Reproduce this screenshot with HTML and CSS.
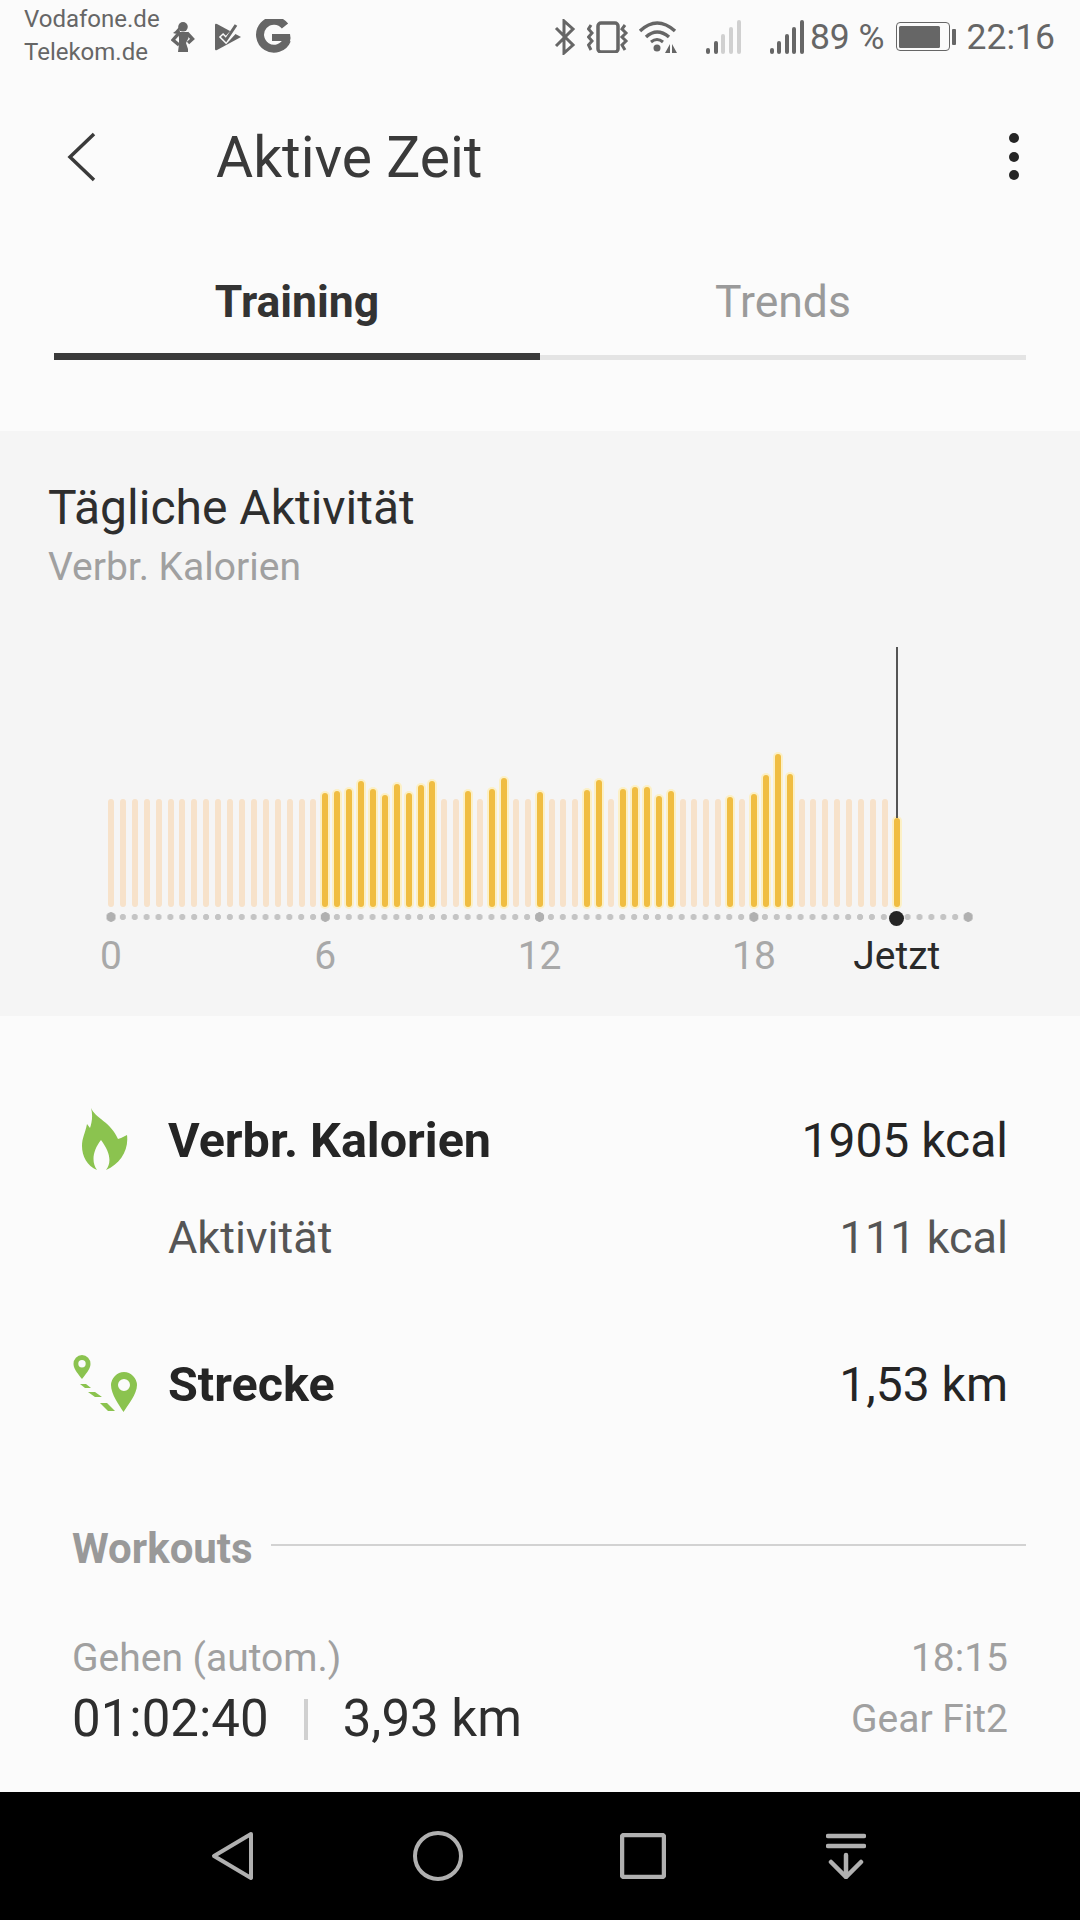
FILE: index.html
```html
<!DOCTYPE html>
<html lang="de">
<head>
    <meta charset="UTF-8">
    <meta name="viewport" content="width=device-width, initial-scale=1.0">
    <title>Aktive Zeit</title>
    <link rel="stylesheet" href="styles.css">
</head>
<body>
    <div class="status-bar">
        <div class="carrier">Vodafone.de<br>Telekom.de</div>
        <svg class="ic-person" width="24" height="30" viewBox="0 0 24 30"><circle cx="12" cy="4.800" r="4.800"/><path d="M8 5 Q5 9 2 11 Q6 13 9 10 Z"/><path d="M7 10 L17 10 L17.500 16 L15 21 L17 27 L17 30 L7 30 L8 22 L8 16 Z"/><path class="line" d="M8 11 L2 18 L8 23 M16 11 L21.500 17 L17 21" fill="none" stroke-width="3.400"/></svg>
        <svg class="ic-flag" width="26" height="28" viewBox="0 0 26 28"><path d="M0 2 Q0 0 2 1 L26 14 L2 27 Q0 28 0 26 Z"/><path class="cut" d="M6 12 L11 17 L22 5" fill="none" stroke-width="6"/><path class="line" d="M7 13 L11 17 L21 2" fill="none" stroke-width="3"/></svg>
        <svg class="ic-g" width="36" height="36" viewBox="0 0 36 36"><path d="M30 7 A14 14 0 1 0 32 21" fill="none" stroke-width="8"/><path d="M17 15 L35 15 Q36 19 35 22 L17 22 Z" class="fill"/></svg>
        <div class="status-right">
            <svg class="ic-stroke" width="22" height="36" viewBox="0 0 22 36"><path d="M2 9 L19 26 L10 34 L10 2 L19 10 L2 27" fill="none" stroke-width="3"/></svg>
            <svg class="ic-stroke ic-vibrate" width="42" height="32" viewBox="0 0 42 32"><rect x="11" y="2" width="20" height="29" rx="3" fill="none" stroke-width="3.500"/><path d="M4 4 L1.500 8 L5 12 L1.500 16 L5 20 L1.500 24 L4 29" fill="none" stroke-width="3"/><path d="M38 4 L35 8 L39 12 L35 16 L39 20 L35 24 L38 29" fill="none" stroke-width="3"/></svg>
            <svg class="ic-stroke ic-wifi" width="40" height="34" viewBox="0 0 40 34"><path d="M2 11 Q19 -5 37 11" fill="none" stroke-width="3.500"/><path d="M8 17 Q19 7 31 17" fill="none" stroke-width="3.500"/><path d="M13 22 Q19 17 25 22" fill="none" stroke-width="3"/><circle class="fill" cx="19" cy="28" r="3.500"/><path class="fill" d="M32 24 L32 33 L27 33 Z M34 24 L39 33 L34 33 Z"/></svg>
            <div class="signal faded"><i class="s1"></i><i class="s2"></i><i class="s3"></i><i class="s4"></i><i class="s5"></i></div>
            <div class="signal"><i class="s1"></i><i class="s2"></i><i class="s3"></i><i class="s4"></i><i class="s5"></i></div>
            <span class="battery-text">89 %</span>
            <div class="battery"><div class="battery-body"><div class="battery-fill"></div></div><div class="battery-nub"></div></div>
            <span class="clock">22:16</span>
        </div>
    </div>

    <div class="toolbar">
        <svg class="back" width="30" height="50" viewBox="0 0 30 50"><path d="M27 2 L3 25 L27 48" fill="none" stroke="#3a3a3a" stroke-width="3.500"/></svg>
        <h1>Aktive Zeit</h1>
        <div class="kebab"><i></i><i></i><i></i></div>
    </div>

    <div class="tabs">
        <div class="tab active">Training</div>
        <div class="tab">Trends</div>
    </div>

    <div class="chart-card">
        <h2>Tägliche Aktivität</h2>
        <div class="chart-sub">Verbr. Kalorien</div>
        <div class="bars">
            <i></i><i></i><i></i><i></i><i></i><i></i><i></i><i></i><i></i><i></i><i></i><i></i><i></i><i></i><i></i><i></i><i></i><i></i>
            <i class="on" style="height:114px"></i><i class="on" style="height:116px"></i><i class="on" style="height:118px"></i><i class="on" style="height:126px"></i><i class="on" style="height:118px"></i><i class="on" style="height:112px"></i><i class="on" style="height:123px"></i><i class="on" style="height:114px"></i><i class="on" style="height:122px"></i><i class="on" style="height:126px"></i>
            <i></i><i></i>
            <i class="on" style="height:116px"></i>
            <i></i>
            <i class="on" style="height:118px"></i><i class="on" style="height:129px"></i>
            <i></i><i></i>
            <i class="on" style="height:115px"></i>
            <i></i><i></i><i></i>
            <i class="on" style="height:117px"></i><i class="on" style="height:127px"></i>
            <i></i>
            <i class="on" style="height:118px"></i><i class="on" style="height:120px"></i><i class="on" style="height:120px"></i><i class="on" style="height:111px"></i><i class="on" style="height:116px"></i>
            <i></i><i></i><i></i><i></i>
            <i class="on" style="height:110px"></i>
            <i></i>
            <i class="on" style="height:113px"></i><i class="on" style="height:132px"></i><i class="on" style="height:153px"></i><i class="on" style="height:133px"></i>
            <i></i><i></i><i></i><i></i><i></i><i></i><i></i><i></i>
            <i class="on now" style="height:89px"></i>
        </div>
        <div class="ticks"></div>
        <div class="axis">
            <span>0</span><span>6</span><span>12</span><span>18</span><span class="axis-now">Jetzt</span>
        </div>
    </div>

    <div class="stat-row first">
        <div class="stat-icon">
            <svg class="flame" width="46" height="63" viewBox="0 0 46 63"><path d="M9 0 C13 10 29 14 36 31 L39 30 L45 27 C47 42 38 56 24 62 C30 54 28 44 19 32 C11 42 9 54 15 62 C5 58 0 48 0 38 C0 30 3 26 5 16 L8 20 C10 14 11 7 9 0 Z" fill="#8bc34f"/></svg>
        </div>
        <span class="stat-label">Verbr. Kalorien</span>
        <span class="stat-value">1905 kcal</span>
    </div>
    <div class="stat-row sub">
        <div class="stat-icon"></div>
        <span class="stat-label">Aktivität</span>
        <span class="stat-value">111 kcal</span>
    </div>
    <div class="stat-row third">
        <div class="stat-icon">
            <svg class="pins" width="65" height="58" viewBox="0 0 65 58"><path fill-rule="evenodd" fill="#8bc34f" d="M9 0 A8.700 8.700 0 0 1 17.500 9 C17.500 14 12 20 9 24 C6 20 0.500 14 0.500 9 A8.700 8.700 0 0 1 9 0 Z M9 5 A3.700 3.700 0 1 0 9 12.400 A3.700 3.700 0 1 0 9 5 Z"/><path fill-rule="evenodd" fill="#8bc34f" d="M51 17 A13.500 13.500 0 0 1 64 30 C64 39 55 50 50.500 57 C46 50 38 39 38 30 A13.500 13.500 0 0 1 51 17 Z M51 24 A6 6 0 1 0 51 36 A6 6 0 1 0 51 24 Z"/><path fill="#8bc34f" d="M7 29 L13 29 L18 33 L12 33 Z M15 37 L22 37 L29 42 L22 42 Z M27 48 L34 48 L42 56 L35 56 Z"/></svg>
        </div>
        <span class="stat-label">Strecke</span>
        <span class="stat-value">1,53 km</span>
    </div>

    <div class="section-head">
        <span>Workouts</span>
        <div class="rule"></div>
    </div>

    <div class="workout">
        <div class="workout-row top">
            <span>Gehen (autom.)</span>
            <span>18:15</span>
        </div>
        <div class="workout-row main">
            <div class="workout-figures">
                <span>01:02:40</span>
                <i class="sep"></i>
                <span>3,93 km</span>
            </div>
            <span class="device">Gear Fit2</span>
        </div>
    </div>

    <div class="nav-bar">
        <svg class="nav-back" width="44" height="50" viewBox="0 0 44 50"><path d="M40 3 L3 25 L40 47 Z" fill="none" stroke="#b0b0b0" stroke-width="4" stroke-linejoin="round"/></svg>
        <svg width="50" height="50" viewBox="0 0 50 50"><circle cx="25" cy="25" r="23" fill="none" stroke="#b0b0b0" stroke-width="4"/></svg>
        <svg width="46" height="46" viewBox="0 0 46 46"><rect x="2" y="2" width="42" height="42" rx="2" fill="none" stroke="#b0b0b0" stroke-width="4.500"/></svg>
        <svg class="nav-drop" width="40" height="46" viewBox="0 0 40 46"><path d="M2 3 L38 3 M2 13 L38 13 M20 22 L20 44 M5 29 L20 44 L35 29" fill="none" stroke="#b0b0b0" stroke-width="4.500" stroke-linecap="round"/></svg>
    </div>
</body>
</html>
```

FILE: styles.css
```css
* {
    box-sizing: border-box;
}
body {
    font-family: Roboto, "Liberation Sans", sans-serif;
    margin: 0;
    padding: 0;
    width: 1080px;
    height: 1920px;
    overflow: hidden;
    background: #fbfbfb;
    display: flex;
    flex-direction: column;
}
.status-bar {
    display: flex;
    align-items: center;
    height: 70px;
    padding: 3px 25px 0 24px;
    color: #666;
    flex-shrink: 0;
}
.status-bar svg {
    fill: #666;
    stroke: none;
    flex-shrink: 0;
}
.status-bar .ic-stroke {
    fill: none;
    stroke: #666;
}
.status-bar .ic-stroke .fill {
    fill: #666;
    stroke: none;
}
.carrier {
    font-size: 24px;
    line-height: 33px;
    width: 147px;
    margin-top: -1px;
}
.ic-person .line {
    stroke: #666;
}
.ic-flag {
    margin-left: 20px;
}
.ic-flag .cut {
    stroke: #fbfbfb;
}
.ic-flag .line {
    stroke: #666;
}
.ic-g {
    margin-left: 14px;
}
.ic-g path {
    stroke: #666;
}
.ic-g .fill {
    stroke: none;
}
.status-right {
    margin-left: auto;
    display: flex;
    align-items: center;
}
.ic-vibrate {
    margin-left: 11px;
}
.ic-wifi {
    margin-left: 9px;
}
.signal {
    display: flex;
    align-items: flex-end;
    gap: 3.600px;
    height: 34px;
    margin-left: 28px;
}
.signal i {
    width: 4px;
    background: #666;
    border-radius: 2px;
}
.signal + .signal {
    margin-left: 29px;
}
.signal.faded i {
    background: #d0d0d0;
}
.signal.faded .s1,
.signal.faded .s2 {
    background: #666;
}
.s1 { height: 6px; }
.s2 { height: 13px; }
.s3 { height: 20px; }
.s4 { height: 27px; }
.s5 { height: 34px; }
.battery-text {
    font-size: 35.500px;
    margin-left: 6px;
}
.clock {
    font-size: 35.500px;
    margin-left: 11px;
}
.battery {
    display: flex;
    align-items: center;
    gap: 2px;
    margin-left: 11px;
}
.battery-body {
    width: 54px;
    height: 29px;
    border: 1.500px solid #666;
    border-radius: 4px;
    padding: 2.500px;
}
.battery-fill {
    width: 41px;
    height: 100%;
    background: #666;
    border-radius: 1.500px;
}
.battery-nub {
    width: 4px;
    height: 16px;
    background: #666;
    border-radius: 1px;
}
.toolbar {
    display: flex;
    align-items: center;
    height: 174px;
    padding: 1px 0 0 67px;
    flex-shrink: 0;
}
.back {
    margin-top: -2px;
}
h1 {
    margin: 0 0 0 119px;
    font-size: 57px;
    font-weight: 400;
    color: #3a3a3a;
}
.kebab {
    margin-left: auto;
    margin-right: 61px;
    margin-top: -2px;
    display: flex;
    flex-direction: column;
    gap: 8.500px;
}
.kebab i {
    display: block;
    width: 10px;
    height: 10px;
    border-radius: 50%;
    background: #252525;
}
.tabs {
    display: flex;
    margin: 0 54px;
    height: 116px;
    flex-shrink: 0;
}
.tab {
    flex: 1;
    text-align: center;
    font-size: 44.500px;
    line-height: 116px;
    color: #9a9a9a;
    border-bottom: 5px solid #e4e4e4;
}
.tab.active {
    font-weight: 700;
    color: #333;
    border-bottom: 7px solid #3a3a3a;
}
.chart-card {
    margin-top: 71px;
    height: 585px;
    padding-top: 51px;
    background: #f5f5f5;
    flex-shrink: 0;
}
h2 {
    margin: 0 0 0 48px;
    font-size: 48px;
    line-height: 52px;
    font-weight: 400;
    color: #2e2e2e;
}
.chart-sub {
    margin: 11px 0 0 48px;
    font-size: 39px;
    line-height: 44px;
    color: #a0a0a0;
}
.bars {
    display: flex;
    justify-content: space-between;
    align-items: flex-end;
    width: 792px;
    height: 160px;
    margin: 158px 0 0 108px;
}
.bars i {
    display: block;
    position: relative;
    width: 6px;
    height: 108px;
    border-radius: 3px;
    background: #f7e2ca;
}
.bars .on {
    background: #f0bd42;
    box-shadow: 0 0 0 2px #fcf0c6;
}
.bars .now::before {
    content: "";
    position: absolute;
    left: 2px;
    bottom: 100%;
    width: 2px;
    height: 171px;
    background: #555;
}
.bars .now::after {
    content: "";
    position: absolute;
    left: -4.500px;
    top: 92.500px;
    width: 15px;
    height: 15px;
    border-radius: 50%;
    background: #252525;
}
.ticks {
    width: 870px;
    height: 12px;
    margin: 4px 0 0 105px;
    background:
        radial-gradient(circle, #b0b0b0 4.500px, transparent 5px) -101.140px 0 / 214.286px 12px repeat-x,
        radial-gradient(circle, #c4c4c4 2.800px, transparent 3.300px) 0 0 / 11.905px 12px repeat-x;
}
.axis {
    display: grid;
    grid-template-columns: repeat(3, 214.300px) 142.900px 1px;
    margin: 11px 0 0 111px;
    font-size: 39px;
    line-height: 44px;
    color: #a8a8a8;
}
.axis span {
    width: 0;
    display: flex;
    justify-content: center;
    white-space: nowrap;
}
.axis .axis-now {
    color: #2a2a2a;
}
.stat-row {
    display: flex;
    align-items: center;
    height: 60px;
    padding: 0 72px 0 73px;
    font-size: 48px;
    color: #252525;
    flex-shrink: 0;
}
.stat-row.first {
    margin-top: 94px;
}
.stat-row.sub {
    margin-top: 37px;
    font-size: 45px;
    color: #555;
}
.stat-row.third {
    margin-top: 87px;
}
.stat-icon {
    width: 95px;
    display: flex;
}
.flame {
    margin: -2px 0 0 9px;
}
.stat-label {
    font-weight: 400;
}
.first .stat-label,
.third .stat-label {
    font-weight: 700;
    font-size: 48.500px;
}
.stat-value {
    margin-left: auto;
}
.section-head {
    display: flex;
    align-items: center;
    margin: 110px 54px 0 72px;
    height: 48px;
    font-size: 42px;
    font-weight: 700;
    color: #999;
    flex-shrink: 0;
}
.rule {
    flex: 1;
    height: 2px;
    margin: 0 0 6px 18px;
    background: #d2d2d2;
}
.workout {
    margin-top: 64px;
    padding: 0 72px;
    flex-shrink: 0;
}
.workout-row {
    display: flex;
    justify-content: space-between;
    align-items: center;
}
.workout-row.top {
    font-size: 39px;
    line-height: 44px;
    color: #a0a0a0;
}
.workout-row.main {
    margin-top: 8px;
    line-height: 60px;
}
.workout-figures {
    display: flex;
    align-items: center;
    padding-top: 1px;
    font-size: 51px;
    color: #2e2e2e;
}
.sep {
    width: 4px;
    height: 41px;
    margin: 0 35px 0 35px;
    background: #d0d0d0;
}
.device {
    font-size: 39px;
    color: #a0a0a0;
}
.nav-bar {
    margin-top: auto;
    height: 128px;
    background: #000;
    flex-shrink: 0;
    display: flex;
    align-items: center;
    gap: 157px;
    padding-left: 211px;
}
.nav-back {
    margin-right: 1px;
}
.nav-drop {
    margin-left: 3px;
}
```
